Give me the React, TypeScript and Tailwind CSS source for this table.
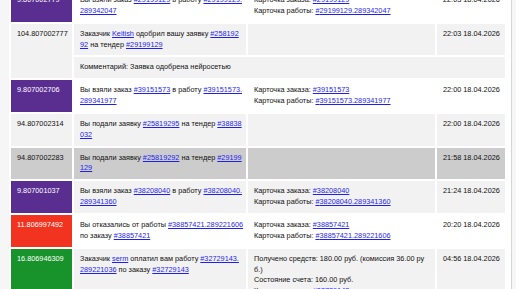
import React from "react";

type Row = {
  sum: string;
  tone: "purple" | "red" | "green" | "plain";
  bg: string;
  text: React.ReactNode;
  card?: React.ReactNode;
  date: string;
  comment?: string;
};

const L = ({ children }: { children: React.ReactNode }) => (
  <a href="#" className="text-[#1f1fee] underline">
    {children}
  </a>
);

const cardLinks = (order: string, work: string) => (
  <>
    Карточка заказа: <L>#{order}</L>
    <br />
    Карточка работы: <L>#{order}.{work}</L>
  </>
);

const rows: Row[] = [
  {
    sum: "9.807002779",
    tone: "purple",
    bg: "bg-white",
    text: (
      <>
        Вы взяли заказ <L>#29199129</L> в работу <L>#29199129.<br />289342047</L>
      </>
    ),
    card: cardLinks("29199129", "289342047"),
    date: "22:03 18.04.2026",
  },
  {
    sum: "104.807002777",
    tone: "plain",
    bg: "bg-[#f2f2f2]",
    text: (
      <>
        Заказчик <L>Keitish</L> одобрил вашу заявку <L>#258192<br />92</L> на тендер <L>#29199129</L>
      </>
    ),
    date: "22:03 18.04.2026",
    comment: "Комментарий: Заявка одобрена нейросетью",
  },
  {
    sum: "9.807002706",
    tone: "purple",
    bg: "bg-white",
    text: (
      <>
        Вы взяли заказ <L>#39151573</L> в работу <L>#39151573.<br />289341977</L>
      </>
    ),
    card: cardLinks("39151573", "289341977"),
    date: "22:00 18.04.2026",
  },
  {
    sum: "94.807002314",
    tone: "plain",
    bg: "bg-[#f2f2f2]",
    text: (
      <>
        Вы подали заявку <L>#25819295</L> на тендер <L>#38838<br />032</L>
      </>
    ),
    date: "22:00 18.04.2026",
  },
  {
    sum: "94.807002283",
    tone: "plain",
    bg: "bg-[#cccccc]",
    text: (
      <>
        Вы подали заявку <L>#25819292</L> на тендер <L>#29199<br />129</L>
      </>
    ),
    date: "21:58 18.04.2026",
  },
  {
    sum: "9.807001037",
    tone: "purple",
    bg: "bg-[#f2f2f2]",
    text: (
      <>
        Вы взяли заказ <L>#38208040</L> в работу <L>#38208040.<br />289341360</L>
      </>
    ),
    card: cardLinks("38208040", "289341360"),
    date: "21:24 18.04.2026",
  },
  {
    sum: "11.806997492",
    tone: "red",
    bg: "bg-white",
    text: (
      <>
        Вы отказались от работы <L>#38857421.289221606</L>
        <br />
        по заказу <L>#38857421</L>
      </>
    ),
    card: cardLinks("38857421", "289221606"),
    date: "20:20 18.04.2026",
  },
  {
    sum: "16.806946309",
    tone: "green",
    bg: "bg-[#f2f2f2]",
    text: (
      <>
        Заказчик <L>serm</L> оплатил вам работу <L>#32729143.<br />289221036</L> по заказу <L>#32729143</L>
      </>
    ),
    card: (
      <>
        Получено средств: 180.00 руб. (комиссия 36.00 ру
        <br />
        б.)
        <br />
        Состояние счета: 160.00 руб.
        <br />
        Карточка заказа: <L>#32729143</L>
        <br />
        Карточка работы: <L>#32729143.289221036</L>
      </>
    ),
    date: "04:56 18.04.2026",
  },
];

const toneClass = {
  purple: "bg-[#5a2d91] text-white",
  red: "bg-[#f1331f] text-white",
  green: "bg-[#18932c] text-white",
  plain: "",
};

const cell = "align-top px-[6px] py-[5px] whitespace-nowrap";

export default function App() {
  return (
    <div
      className="h-[289px] overflow-hidden bg-[#f6f6f6] text-[#111] text-[7.3px] leading-[10.85px]"
      style={{ fontFamily: '"Liberation Sans", Arial, sans-serif' }}
    >
      <div className="ml-[9px] w-[503px] -mt-[12px] bg-white border-r border-[#d6d6d6]">
        <table className="table-fixed border-separate border-spacing-0.5 w-[498px] bg-white">
          <colgroup>
            <col className="w-[61px]" />
            <col className="w-[172px]" />
            <col className="w-[187px]" />
            <col className="w-[68px]" />
          </colgroup>
          <tbody>
            {rows.map((r) => (
              <React.Fragment key={r.sum}>
                <tr className={r.bg}>
                  <td
                    rowSpan={r.comment ? 2 : 1}
                    className={`${cell} ${toneClass[r.tone]}`}
                  >
                    {r.sum}
                  </td>
                  <td className={cell}>{r.text}</td>
                  <td className={cell}>{r.card}</td>
                  <td className={cell}>{r.date}</td>
                </tr>
                {r.comment && (
                  <tr className={r.bg}>
                    <td colSpan={3} className={cell}>
                      {r.comment}
                    </td>
                  </tr>
                )}
              </React.Fragment>
            ))}
          </tbody>
        </table>
      </div>
    </div>
  );
}
